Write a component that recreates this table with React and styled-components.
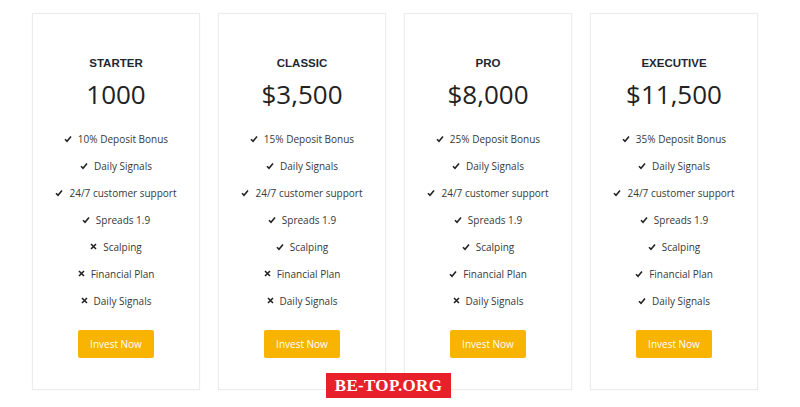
import React from 'react'
import styled, { createGlobalStyle } from 'styled-components'

const Global = createGlobalStyle`
    body {
        margin: 0;
        background: #fff;
        font-family: "Open Sans", "Liberation Sans", sans-serif;
    }
`

const Page = styled.div`
    position: relative;
    width: 800px;
    height: 407px;
    overflow: hidden;
    padding: 13px 0 0 32px;
    box-sizing: border-box;
`

const Row = styled.div`
    display: flex;
    gap: 18px;
`

const Card = styled.div`
    width: 168px;
    height: 377px;
    box-sizing: border-box;
    border: 1px solid #ececec;
    box-shadow: 0 0 2px rgba(0, 0, 0, 0.04);
    padding: 42px 0 0;
    display: flex;
    flex-direction: column;
    align-items: center;
`

const Title = styled.div`
    font-family: "Liberation Sans", Arial, sans-serif;
    font-weight: 700;
    font-size: 11.5px;
    line-height: 14px;
    color: #1f2731;
`

const Price = styled.div`
    margin-top: 8px;
    font-size: 26px;
    font-weight: 500;
    line-height: 32px;
    color: #222;
`

const List = styled.ul`
    list-style: none;
    margin: 15px 0 0;
    padding: 0;
    display: flex;
    flex-direction: column;
    align-items: center;
`

const Item = styled.li`
    height: 27px;
    display: flex;
    align-items: center;
    gap: 6px;
    font-size: 10px;
    color: #383838;
`

const Button = styled.button`
    margin-top: 16px;
    width: 76px;
    height: 28px;
    border: none;
    border-radius: 2px;
    background: #f8b400;
    color: #fff;
    font-family: "Open Sans", sans-serif;
    font-size: 10px;
    padding: 0;
`

const Badge = styled.div`
    position: absolute;
    left: 326px;
    top: 373px;
    width: 125px;
    height: 25px;
    background: #e8202a;
    color: #fff;
    font-family: "Liberation Serif", "DejaVu Serif", serif;
    font-weight: 700;
    font-size: 17px;
    display: flex;
    align-items: center;
    justify-content: center;
    letter-spacing: 0.3px;
`

function Check () {
    return (
        <svg width="8" height="8" viewBox="0 0 8 8">
            <path d="M1 4.3 L3 6.3 L7 1.6" fill="none" stroke="#222" strokeWidth="1.6"/>
        </svg>
    )
}

function Cross () {
    return (
        <svg width="7" height="7" viewBox="0 0 7 7">
            <path d="M1 1 L6 6 M6 1 L1 6" fill="none" stroke="#222" strokeWidth="1.6"/>
        </svg>
    )
}

const FEATURES = ['Deposit Bonus', 'Daily Signals', '24/7 customer support', 'Spreads 1.9', 'Scalping', 'Financial Plan', 'Daily Signals']

const PLANS = [
    { name: 'STARTER', price: '1000', bonus: '10%', yes: 4 },
    { name: 'CLASSIC', price: '$3,500', bonus: '15%', yes: 5 },
    { name: 'PRO', price: '$8,000', bonus: '25%', yes: 6 },
    { name: 'EXECUTIVE', price: '$11,500', bonus: '35%', yes: 7 },
]

function Plan ({ plan }) {
    return (
        <Card>
            <Title>{plan.name}</Title>
            <Price>{plan.price}</Price>
            <List>
                {FEATURES.map((f, i) => (
                    <Item key={i}>
                        {i < plan.yes ? <Check/> : <Cross/>}
                        {i === 0 ? `${plan.bonus} ${f}` : f}
                    </Item>
                ))}
            </List>
            <Button>Invest Now</Button>
        </Card>
    )
}

export default function App () {
    return (
        <Page>
            <Global/>
            <Row>
                {PLANS.map(p => <Plan key={p.name} plan={p}/>)}
            </Row>
            <Badge>BE-TOP.ORG</Badge>
        </Page>
    )
}
